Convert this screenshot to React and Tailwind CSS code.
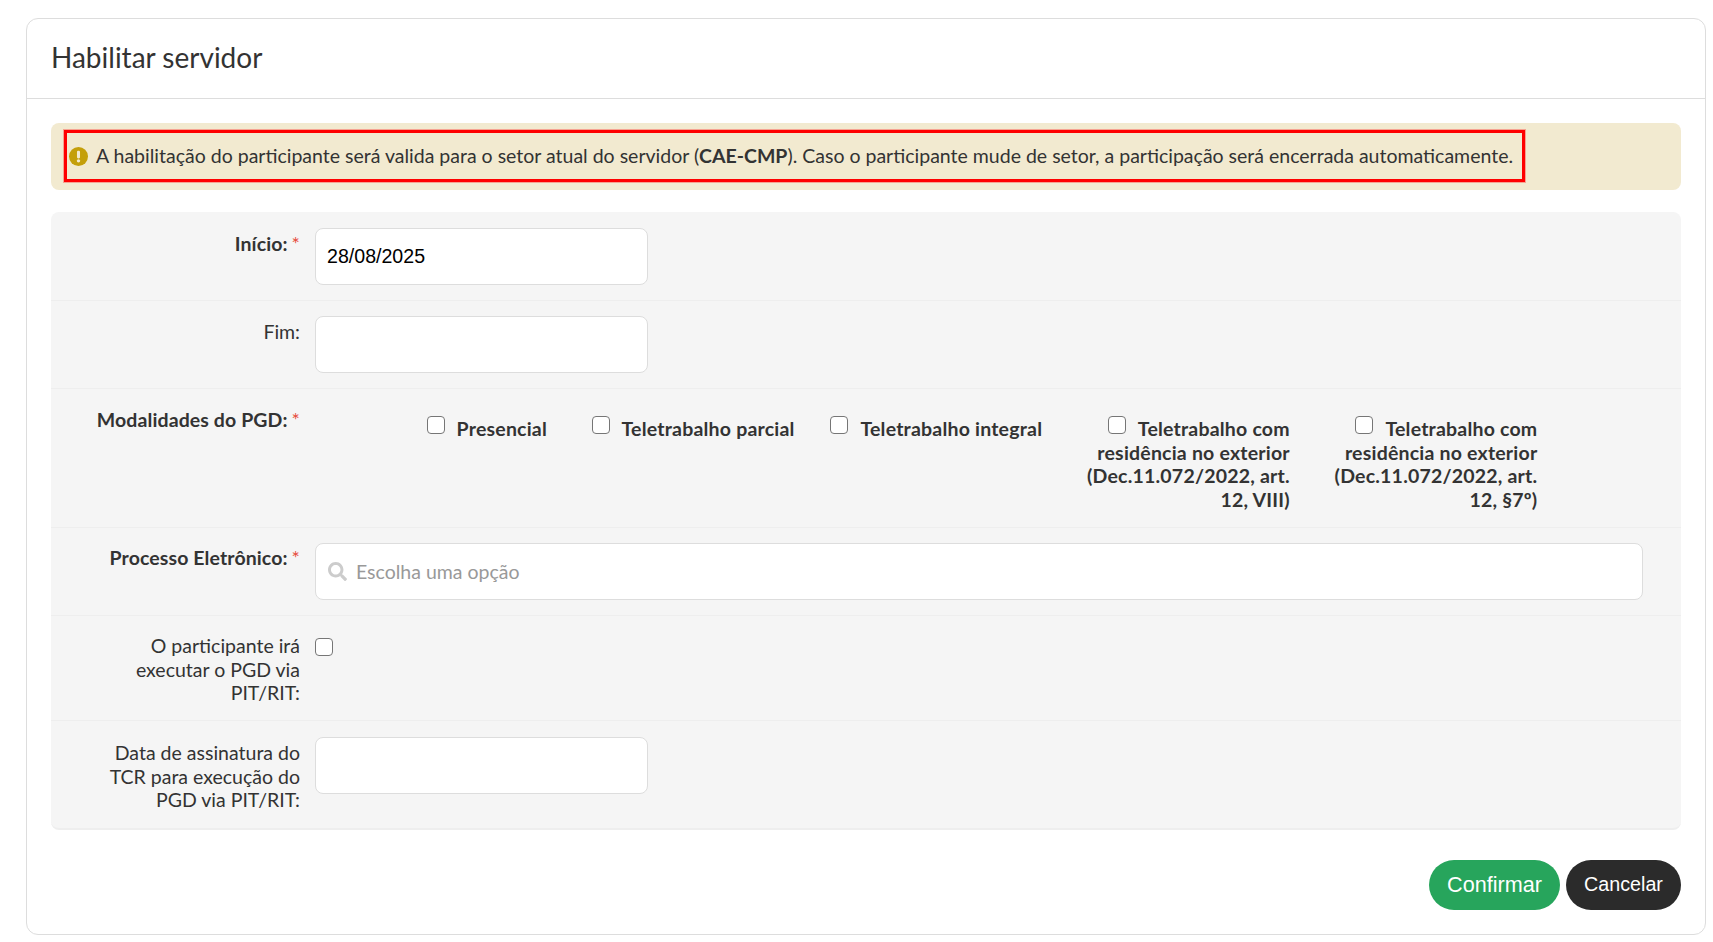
import React from "react";
import { FaSearch } from "react-icons/fa";

const FieldLabel = ({ children, required, bold, className = "pt-1" }) => (
  <label className={`w-[264px] shrink-0 pr-[15px] pl-[30px] text-right ${className} ${bold ? "font-bold tracking-[0.1px]" : ""}`}>
    {children}
    {required && <span className="ml-1 font-normal text-[#e74c3c]">*</span>}
  </label>
);

const TextBox = ({ value }) => (
  <input
    readOnly
    value={value}
    className="h-[57px] w-[333px] rounded-lg border border-[#ddd] bg-white px-[11px] font-['Liberation_Sans',sans-serif] text-[19.6px] text-black"
  />
);

const Check = ({ className }) => (
  <input
    type="checkbox"
    className={`h-[18px] w-[18px] appearance-none rounded-[4px] border-[1.5px] border-[#767676] bg-white ${className}`}
  />
);

const modalidades = [
  "Presencial",
  "Teletrabalho parcial",
  "Teletrabalho integral",
  "Teletrabalho com residência no exterior (Dec.11.072/2022, art. 12, VIII)",
  "Teletrabalho com residência no exterior (Dec.11.072/2022, art. 12, §7º)",
];

const App = () => {
  return (
    <div className="min-h-[942px] bg-white pt-[18px] pr-[7px] pb-2 pl-[26px] font-['Lato',sans-serif] text-[19.5px] leading-[23.7px] text-[#333]">
      <div className="h-[917px] rounded-xl border border-[#ddd]">
        <div className="flex h-[80px] items-center border-b border-[#ddd] px-6 pb-0.5">
          <h1 className="text-[28px] text-[#333]">Habilitar servidor</h1>
        </div>

        <div className="px-6 pt-6">
          <div className="h-[67px] rounded-lg bg-[#f2ead0] px-[13px] pt-[7px]">
            <div className="inline-flex h-[52px] w-[1461px] items-center gap-2 border-[3px] border-[#f00] pl-0.5 shadow-[0_0_0_1px_rgba(255,0,0,0.3)]">
              <svg viewBox="0 0 20 20" className="h-[19px] w-[19px] shrink-0">
                <circle cx="10" cy="10" r="10" fill="#c49f0a" />
                <rect x="8.4" y="4" width="3.2" height="8" rx="1.2" fill="#f2ead0" />
                <circle cx="10" cy="14.6" r="1.8" fill="#f2ead0" />
              </svg>
              <span className="whitespace-nowrap">
                A habilitação do participante será valida para o setor atual do servidor (<b>CAE-CMP</b>). Caso o participante mude de setor, a participação será encerrada automaticamente.
              </span>
            </div>
          </div>

          <form className="mt-[22px] h-[618px] rounded-lg border-b-2 border-[#eee] bg-[#f5f5f5]">
            <div className="flex h-[89px] items-start border-b border-[#eee] pt-4">
              <FieldLabel required bold>Início:</FieldLabel>
              <TextBox value="28/08/2025" />
            </div>
            <div className="flex h-[88px] items-start border-b border-[#eee] pt-[15px]">
              <FieldLabel>Fim:</FieldLabel>
              <TextBox value="" />
            </div>
            <div className="flex h-[139px] items-start border-b border-[#eee] pt-[15px]">
              <FieldLabel required bold>Modalidades do PGD:</FieldLabel>
              <div className="grid grid-cols-[232px_repeat(4,247.6px)] pt-3 font-bold tracking-[0.2px]">
                {modalidades.map((m) => (
                  <div key={m} className="pl-[30px] text-right">
                    <Check className="mr-[12px] align-[2px]" />
                    {m}
                  </div>
                ))}
              </div>
            </div>
            <div className="flex h-[88px] items-start border-b border-[#eee] pt-[15px]">
              <FieldLabel required bold className="pt-[3px]">Processo Eletrônico:</FieldLabel>
              <div className="flex h-[57px] w-[1328px] items-center gap-[9px] rounded-lg border border-[#ddd] bg-white px-3 text-[#999]">
                <FaSearch className="h-[19px] w-[19px] text-[#ccc]" />
                <span>Escolha uma opção</span>
              </div>
            </div>
            <div className="flex h-[105px] items-start border-b border-[#eee] pt-[14px]">
              <FieldLabel>O participante irá executar o PGD via PIT/RIT:</FieldLabel>
              <Check className="mt-2" />
            </div>
            <div className="flex items-start pt-4">
              <FieldLabel>Data de assinatura do TCR para execução do PGD via PIT/RIT:</FieldLabel>
              <TextBox value="" />
            </div>
          </form>

          <div className="mt-[30px] flex justify-end gap-[6px] font-['Liberation_Sans',sans-serif] text-white">
            <button className="h-[50px] w-[131px] rounded-full bg-[#27a55c] text-[21.6px]">Confirmar</button>
            <button className="h-[50px] w-[115px] rounded-full bg-[#2b2b2b] text-[19.7px]">Cancelar</button>
          </div>
        </div>
      </div>
    </div>
  );
};

export default App;
